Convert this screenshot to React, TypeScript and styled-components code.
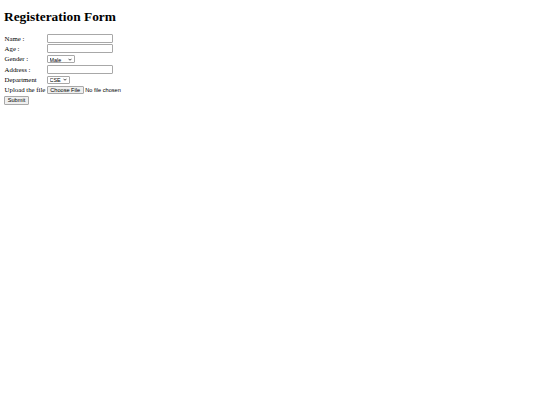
import React from 'react'
import styled, { createGlobalStyle } from 'styled-components'

const GlobalStyle = createGlobalStyle`
    html, body {
        margin: 0;
        background: #ffffff;
    }
    body {
        font-family: "Liberation Serif", "Times New Roman", serif;
        color: #000000;
    }
`

const Page = styled.div`
    padding: 9px 4px;
`

const Title = styled.h1`
    font-size: 13.4px;
    line-height: 15.4px;
    font-weight: 700;
    margin: 0 0 9px;
`

const FormGrid = styled.form`
    display: grid;
    grid-template-columns: auto 1fr;
    grid-auto-rows: 10.3px;
    column-gap: 1.4px;
    align-items: center;
`

const Label = styled.span`
    font-size: 6.8px;
    line-height: 7.8px;
    padding-left: 0.6px;
    white-space: nowrap;
    color: #000000;
`

const Field = styled.div`
    display: flex;
    align-items: center;
    font-family: "Liberation Sans", Arial, sans-serif;
`

const TextInput = styled.input`
    box-sizing: border-box;
    width: 66px;
    height: 8.8px;
    padding: 0 1px;
    border: 1px solid #a8a8a8;
    border-radius: 1px;
    font-size: 5.6px;
    background: #ffffff;
`

const SelectWrap = styled.div`
    position: relative;
    display: inline-flex;
`

const Select = styled.select<{ $width: number }>`
    appearance: none;
    box-sizing: border-box;
    width: ${p => p.$width}px;
    height: 8px;
    padding: 0.6px 0 0 1.8px;
    border: 1px solid #a8a8a8;
    border-radius: 1px;
    font-size: 5.4px;
    line-height: 6px;
    font-family: "Liberation Sans", Arial, sans-serif;
    background: #ffffff;
    color: #000000;
`

const Chevron = styled.svg`
    position: absolute;
    right: 2.5px;
    top: 2.6px;
    width: 4px;
    height: 3px;
    pointer-events: none;
`

const FileInput = styled.input`
    font-size: 5.6px;
    font-family: "Liberation Sans", Arial, sans-serif;
    color: #000000;

    &::file-selector-button {
        font-size: 5.6px;
        font-family: "Liberation Sans", Arial, sans-serif;
        padding: 0.4px 2.5px;
        margin-right: 1.7px;
        border: 1px solid #a8a8a8;
        border-radius: 1px;
        background: #efefef;
        color: #000000;
    }
`

const SubmitButton = styled.button`
    justify-self: start;
    box-sizing: border-box;
    width: 25px;
    height: 9px;
    font-size: 5.6px;
    font-family: "Liberation Sans", Arial, sans-serif;
    padding: 0;
    border: 1px solid #a8a8a8;
    border-radius: 1px;
    background: #efefef;
    color: #000000;
`

const Dropdown = ({ width, options }: { width: number, options: string[] }) => (
    <SelectWrap>
        <Select $width={width}>
            {options.map(o => <option key={o}>{o}</option>)}
        </Select>
        <Chevron viewBox="0 0 8 6">
            <path d="M1 1.5 L4 4.5 L7 1.5" fill="none" stroke="#222" strokeWidth="1.6" />
        </Chevron>
    </SelectWrap>
)

const App = () => {
  return (
    <Page>
        <GlobalStyle />
        <Title>Registeration Form</Title>
        <FormGrid onSubmit={e => e.preventDefault()}>
            <Label>Name :</Label>
            <Field><TextInput type="text" /></Field>

            <Label>Age :</Label>
            <Field><TextInput type="text" /></Field>

            <Label>Gender :</Label>
            <Field><Dropdown width={28} options={['Male', 'Female']} /></Field>

            <Label>Address :</Label>
            <Field><TextInput type="text" /></Field>

            <Label>Department</Label>
            <Field><Dropdown width={23} options={['CSE', 'ECE', 'EEE']} /></Field>

            <Label>Upload the file</Label>
            <Field><FileInput type="file" /></Field>

            <SubmitButton type="submit">Submit</SubmitButton>
        </FormGrid>
    </Page>
    )
}

export default App
